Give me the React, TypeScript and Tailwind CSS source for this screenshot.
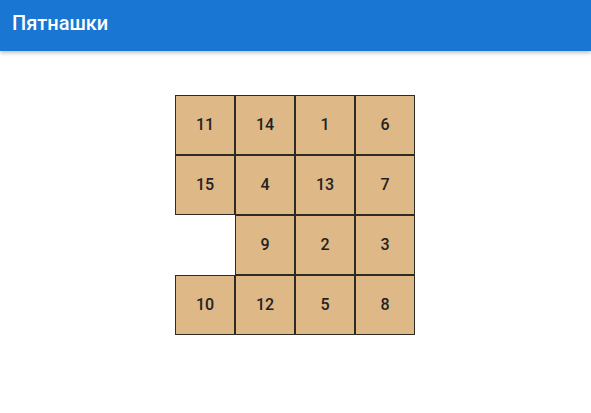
import React from 'react';

const TILES: Array<number | null> = [
  11, 14, 1, 6,
  15, 4, 13, 7,
  null, 9, 2, 3,
  10, 12, 5, 8,
];

export default function App() {
  return (
    <div className="min-h-screen w-full bg-white font-['Roboto',_sans-serif]">
      {/* App bar */}
      <header className="h-[51px] flex items-center px-3 pb-1.5 bg-[#1976d2] shadow-[0_2px_4px_rgba(0,0,0,0.25)]">
        <h1 className="text-white text-[20px] font-medium">Пятнашки</h1>
      </header>

      {/* Board */}
      <main className="flex justify-center pt-[44px] pr-px">
        <div className="grid grid-cols-[repeat(4,60px)] grid-rows-[repeat(4,60px)]">
          {TILES.map((n, i) =>
            n === null ? (
              <div key={i} />
            ) : (
              <div
                key={i}
                className="flex items-center justify-center bg-[#deb887] border border-[#2e2a24] text-[16px] font-medium text-[#222]"
              >
                {n}
              </div>
            )
          )}
        </div>
      </main>
    </div>
  );
}
